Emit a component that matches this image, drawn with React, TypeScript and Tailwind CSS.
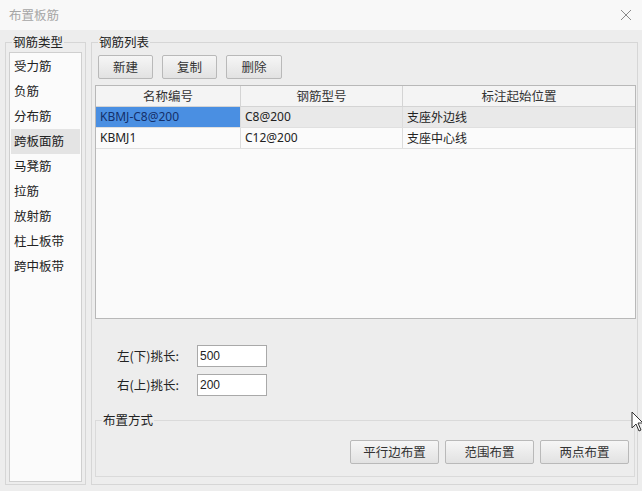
import React from "react";

const font = { fontFamily: '"Noto Sans CJK SC", "Noto Sans", sans-serif' };

function Btn({ children, className = "" }: { children: React.ReactNode; className?: string }) {
  return (
    <button
      className={
        "h-[24px] rounded-[2px] border border-[#b9b9b9] bg-gradient-to-b from-[#f6f6f6] to-[#e2e2e2] text-[12.5px] text-[#333] leading-none " +
        className
      }
    >
      {children}
    </button>
  );
}

const types = ["受力筋", "负筋", "分布筋", "跨板面筋", "马凳筋", "拉筋", "放射筋", "柱上板带", "跨中板带"];

const rows = [
  { name: "KBMJ-C8@200", spec: "C8@200", pos: "支座外边线", sel: true },
  { name: "KBMJ1", spec: "C12@200", pos: "支座中心线", sel: false },
];

export default function App() {
  return (
    <div
      className="relative w-[642px] h-[491px] bg-[#ededed] flex flex-col text-[#222] overflow-hidden"
      style={font}
    >
      {/* title bar */}
      <div className="h-[30px] bg-[#f8f8f8] flex items-center justify-between pl-[9px] pr-[9px] shrink-0">
        <span className="text-[12.5px] text-[#a6a6a6]">布置板筋</span>
        <svg width="12" height="12" viewBox="0 0 12 12" className="mr-[1px]">
          <path d="M1 1L11 11M11 1L1 11" stroke="#8a8a8a" strokeWidth="1" />
        </svg>
      </div>

      <div className="flex flex-1 pt-[4px] pl-[5px] pr-[4px] pb-[6px] gap-[5px]">
        {/* left group */}
        <fieldset className="w-[81px] border border-[#d6d6d6] pl-[3px] pr-[3px] pb-[2px] flex flex-col">
          <legend className="ml-[3px] px-[1px] text-[12.5px] leading-[16px]">钢筋类型</legend>
          <div className="flex-1 mt-[2px] border border-[#cfcfcf] bg-[#fbfbfb] pt-[1px] px-[1px]">
            {types.map((t) => (
              <div
                key={t}
                className={
                  "h-[25px] flex items-center pl-[3px] text-[12.5px] " +
                  (t === "跨板面筋" ? "bg-[#e4e4e4]" : "")
                }
              >
                {t}
              </div>
            ))}
          </div>
        </fieldset>

        {/* right group */}
        <fieldset className="flex-1 border border-[#d6d6d6] pl-[3px] pr-[1px] pb-[3px] flex flex-col">
          <legend className="ml-[3px] px-[1px] text-[12.5px] leading-[16px]">钢筋列表</legend>
          <div className="flex gap-[9px] ml-[3px] mt-[5px]">
            <Btn className="w-[55px]">新建</Btn>
            <Btn className="w-[55px]">复制</Btn>
            <Btn className="w-[56px]">删除</Btn>
          </div>

          {/* table */}
          <div className="mt-[6px] h-[234px] border border-[#b8b8b8] bg-[#fafafa] flex flex-col">
            <div className="h-[21px] flex bg-[#f4f4f4] border-b border-[#d4d4d4] text-[12.5px] text-[#333]">
              <div className="w-[145px] flex items-center justify-center border-r border-[#d4d4d4]">名称编号</div>
              <div className="w-[162px] flex items-center justify-center border-r border-[#d4d4d4]">钢筋型号</div>
              <div className="flex-1 flex items-center justify-center">标注起始位置</div>
            </div>
            {rows.map((r) => (
              <div
                key={r.name}
                className={
                  "h-[21px] flex border-b border-[#e0e0e0] text-[12px] " +
                  (r.sel ? "bg-[#e9e9e9]" : "bg-[#fbfbfb]")
                }
                style={{ fontFamily: '"Noto Sans", "Noto Sans CJK SC", sans-serif' }}
              >
                <div
                  className={
                    "w-[145px] flex items-center pl-[4px] border-r border-[#dcdcdc] " +
                    (r.sel ? "bg-[#4a8fe2] text-[#14306a]" : "")
                  }
                >
                  {r.name}
                </div>
                <div className="w-[162px] flex items-center pl-[4px] border-r border-[#dcdcdc]">{r.spec}</div>
                <div className="flex-1 flex items-center pl-[4px]" style={font}>
                  {r.pos}
                </div>
              </div>
            ))}
          </div>

          {/* lengths */}
          <div className="mt-[26px] flex flex-col gap-[7px] pl-[22px] text-[12.5px]">
            <div className="flex items-center">
              <span className="w-[80px]">左(下)挑长:</span>
              <input
                defaultValue="500"
                className="w-[70px] h-[22px] border border-[#a9a9a9] bg-white px-[2px] text-[12px] outline-none"
                style={{ fontFamily: '"Liberation Sans", sans-serif' }}
              />
            </div>
            <div className="flex items-center">
              <span className="w-[80px]">右(上)挑长:</span>
              <input
                defaultValue="200"
                className="w-[70px] h-[22px] border border-[#a9a9a9] bg-white px-[2px] text-[12px] outline-none"
                style={{ fontFamily: '"Liberation Sans", sans-serif' }}
              />
            </div>
          </div>

          {/* layout mode */}
          <fieldset className="mt-[16px] mr-[1px] border border-[#dadada] pb-[12px] pr-[5px] flex flex-col">
            <legend className="ml-[6px] px-[1px] text-[12.5px] leading-[16px]">布置方式</legend>
            <div className="flex justify-end gap-[6px] mt-[12px]">
              <Btn className="w-[89px]">平行边布置</Btn>
              <Btn className="w-[89px]">范围布置</Btn>
              <Btn className="w-[89px]">两点布置</Btn>
            </div>
          </fieldset>
        </fieldset>
      </div>

      {/* mouse cursor */}
      <svg className="absolute left-[631px] top-[411px]" width="12" height="22" viewBox="0 0 12 22">
        <path d="M1 1L1 17L5 13L8 20L10 19L7 12L12 12Z" fill="#fff" stroke="#333" strokeWidth="1" />
      </svg>
    </div>
  );
}
